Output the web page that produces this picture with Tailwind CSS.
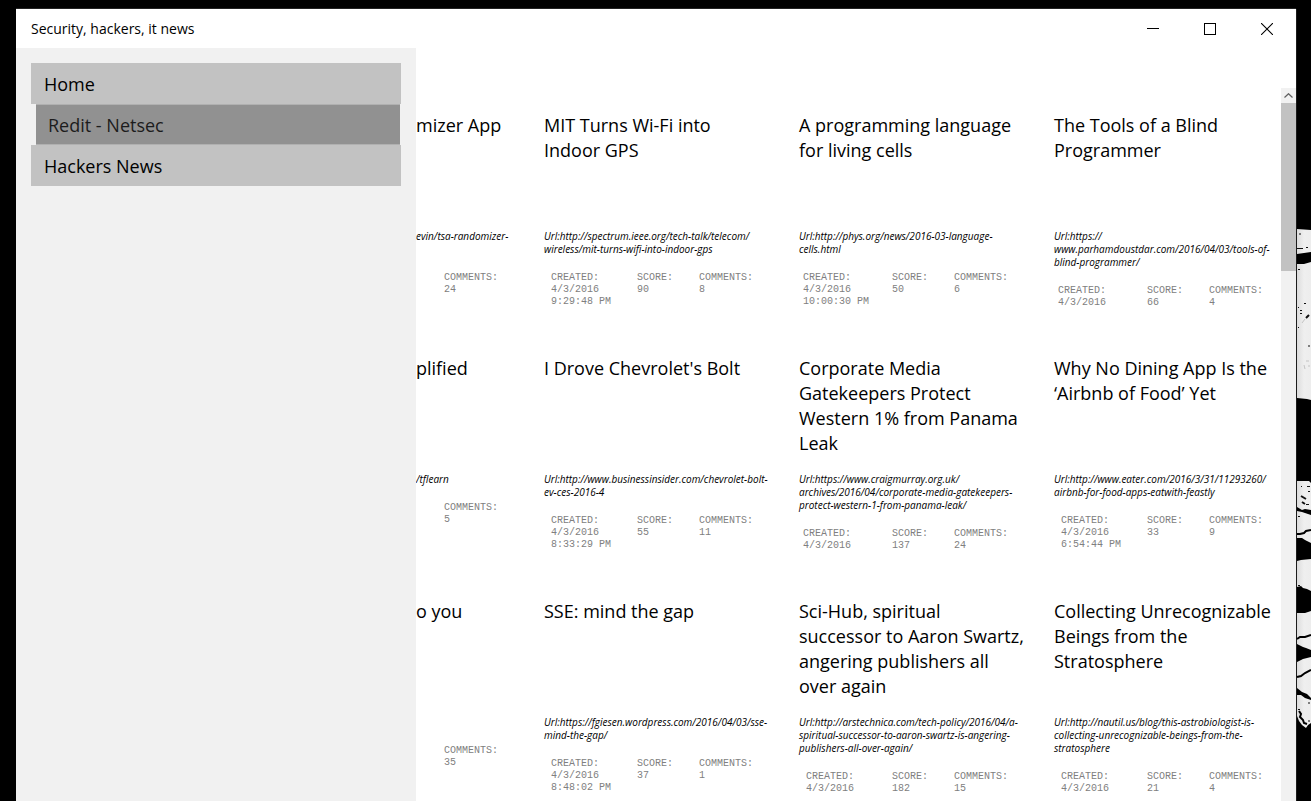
<!DOCTYPE html>
<html lang="en">
<head>
<meta charset="utf-8">
<title>Security, hackers, it news</title>
<script src="https://cdn.jsdelivr.net/npm/@tailwindcss/browser@4"></script>
</head>
<body class="flex h-screen overflow-hidden bg-black pl-4 font-['Open_Sans','Noto_Sans',sans-serif] text-black">
<div class="mt-2 flex min-w-0 flex-1 flex-col border-t border-[#222] bg-white">
  <header class="flex h-[39px] shrink-0 items-center justify-between pr-px">
    <h1 class="pl-[15px] text-sm">Security, hackers, it news</h1>
    <div class="flex">
      <button aria-label="Minimize" class="flex h-[37px] w-[57px] items-center justify-center"><svg width="12" height="12" viewBox="0 0 12 12" shape-rendering="crispEdges"><path d="M0 5.5H12" stroke="#000"/></svg></button>
      <button aria-label="Maximize" class="flex h-[37px] w-[57px] items-center justify-center"><svg width="12" height="12" viewBox="0 0 12 12" shape-rendering="crispEdges"><path d="M.5.5H11.5V11.5H.5Z" fill="none" stroke="#000"/></svg></button>
      <button aria-label="Close" class="flex h-[37px] w-[57px] items-center justify-center"><svg width="12" height="12" viewBox="0 0 12 12"><path d="M0 0L12 12M12 0L0 12" fill="none" stroke="#000" stroke-width="1.1"/></svg></button>
    </div>
  </header>
  <div class="flex min-h-0 flex-1">
    <nav class="flex w-[400px] shrink-0 flex-col bg-[#f1f1f1] p-[15px] text-lg">
      <a href="#" class="flex h-[41px] items-center bg-[#c2c2c2] pl-[13px]">Home</a>
      <a href="#" class="ml-[5px] mr-px flex h-[41px] items-center border-y border-[#b0b0b0] bg-[#919191] pl-3 text-[#1c1c1c]">Redit - Netsec</a>
      <a href="#" class="flex h-[41px] items-center bg-[#c2c2c2] pl-[13px]">Hackers News</a>
    </nav>
    <div class="mt-10 flex min-w-0 flex-1">
      <main id="list" class="grid min-w-0 flex-1 auto-rows-[243px] grid-cols-[128px_255px_255px_1fr] overflow-hidden pt-[25px]"></main>
      <div class="flex w-[15px] shrink-0 flex-col bg-[#f1f1f1]">
        <button aria-label="Scroll up" class="flex h-[15px] items-center justify-center"><svg width="9" height="5" viewBox="0 0 9 5"><path d="M.5 4.5L4.5.7L8.5 4.5" fill="none" stroke="#606060" stroke-width="1.2"/></svg></button>
        <div class="h-[168px] bg-[#c2c2c2]"></div>
      </div>
    </div>
  </div>
</div>
<svg class="shrink-0" width="15" height="801" viewBox="0 0 15 801" aria-hidden="true">
  <defs>
    <linearGradient id="paint"><stop offset="0" stop-color="#dcdcdc"/><stop offset=".5" stop-color="#efefef"/><stop offset="1" stop-color="#ededed"/></linearGradient>
  </defs>
  <path d="M.5 9V801" stroke="#1c1c1c"/>
  <g fill="url(#paint)">
    <path d="M1 229L15 230V252L8 253L1 254Z"/>
    <path d="M1 264L8 264L15 262V400L11 399L1 398Z"/>
    <path d="M1 481H13L15 483V510L9 509L6 510L1 507Z"/>
    <path d="M1 511L6 512L15 515V543L9 540L6 538L1 538Z"/>
    <path d="M1 561L5 560L15 559V591L11 589L7 588L5 586L1 587Z"/>
    <path d="M1 613L9 613L15 611V650L10 648L7 647L1 644Z"/>
    <path d="M1 662L7 659L15 657V698L11 694L6 692L1 688Z"/>
    <path d="M1 695L5 695L9 698L15 700V723L12 725L10 728L6 725L3 721L1 716Z"/>
  </g>
  <g fill="none" stroke="#000" stroke-width="2">
    <path d="M1 534L4 534L8 533L10 531L15 530"/>
    <path d="M1 639L4 637L9 637L15 635"/>
    <path d="M1 677L5 676L9 673L15 670"/>
    <path d="M3 711L5 714L4 717L7 720L8 723L11 724M10 728L11 732"/>
  </g>
  <g fill="none" stroke="#111">
    <path d="M3 234H5M1 248.500H7M10 247.500H12M2 269.500H4M8 303.500H10M2 307.500H3M4 310.500H6M4 313.500H6M2 327.500H3M13 345V347M5 486.500H6M11 486.500H14M12 491.500H14M10 504.500H13M2 516.500H4M2 585.500H4M13 702V704M2 709.500H4M13 720V722"/>
    <path d="M5 496L10 499M6 502L9 504M10 318L13 315" stroke-width="2"/>
  </g>
  <path d="M6 323L9 319M10 361H13M8 365L9 369M13 365V367" fill="none" stroke="#c4c4c4"/>
</svg>
<script>
const stories = [
  { title: "mizer App", url: "evin/tsa-randomizer-<br>&nbsp;", comments: 24 },
  { title: "MIT Turns Wi-Fi into<br>Indoor GPS", url: "Url:http://spectrum.ieee.org/tech-talk/telecom/<br>wireless/mit-turns-wifi-into-indoor-gps", created: "4/3/2016<br>9:29:48 PM", score: 90, comments: 8 },
  { title: "A programming language<br>for living cells", url: "Url:http://phys.org/news/2016-03-language-<br>cells.html", created: "4/3/2016<br>10:00:30 PM", score: 50, comments: 6, wide: true },
  { title: "The Tools of a Blind<br>Programmer", url: "Url:https://<br>www.parhamdoustdar.com/2016/04/03/tools-of-<br>blind-programmer/", created: "4/3/2016", score: 66, comments: 4, wide: true },
  { title: "plified", url: "/tflearn", comments: 5 },
  { title: "I Drove Chevrolet's Bolt", url: "Url:http://www.businessinsider.com/chevrolet-bolt-<br>ev-ces-2016-4", created: "4/3/2016<br>8:33:29 PM", score: 55, comments: 11 },
  { title: "Corporate Media<br>Gatekeepers Protect<br>Western 1% from Panama<br>Leak", url: "Url:https://www.craigmurray.org.uk/<br>archives/2016/04/corporate-media-gatekeepers-<br>protect-western-1-from-panama-leak/", created: "4/3/2016", score: 137, comments: 24, wide: true },
  { title: "Why No Dining App Is the<br>‘Airbnb of Food’ Yet", url: "Url:http://www.eater.com/2016/3/31/11293260/<br>airbnb-for-food-apps-eatwith-feastly", created: "4/3/2016<br>6:54:44 PM", score: 33, comments: 9 },
  { title: "o you", url: "", comments: 35 },
  { title: "SSE: mind the gap", url: "Url:https://fgiesen.wordpress.com/2016/04/03/sse-<br>mind-the-gap/", created: "4/3/2016<br>8:48:02 PM", score: 37, comments: 1 },
  { title: "Sci-Hub, spiritual<br>successor to Aaron Swartz,<br>angering publishers all<br>over again", url: "Url:http://arstechnica.com/tech-policy/2016/04/a-<br>spiritual-successor-to-aaron-swartz-is-angering-<br>publishers-all-over-again/", created: "4/3/2016", score: 182, comments: 15 },
  { title: "Collecting Unrecognizable<br>Beings from the<br>Stratosphere", url: "Url:http://nautil.us/blog/this-astrobiologist-is-<br>collecting-unrecognizable-beings-from-the-<br>stratosphere", created: "4/3/2016", score: 21, comments: 4 },
];
function columns(s) {
  if (!s.created) return "pl-7";
  return s.wide ? "grid grid-cols-[89px_62px_60px] pl-1" : "grid grid-cols-[86px_62px_60px] pl-[7px]";
}
document.getElementById("list").innerHTML = stories.map(s => `
  <article class="min-w-0 whitespace-nowrap">
    <h2 class="h-[117px] text-lg leading-[25px]">${s.title}</h2>
    <p class="min-h-[13px] text-[10px] leading-[13px] italic">${s.url}</p>
    <dl class="mt-4 ${columns(s)} font-['Liberation_Mono',monospace] text-[10px] leading-3 text-[#808080]">
      ${s.created ? `<div><dt>CREATED:</dt><dd>${s.created}</dd></div><div><dt>SCORE:</dt><dd>${s.score}</dd></div>` : ""}
      <div><dt>COMMENTS:</dt><dd>${s.comments}</dd></div>
    </dl>
  </article>`).join("");
</script>
</body>
</html>
